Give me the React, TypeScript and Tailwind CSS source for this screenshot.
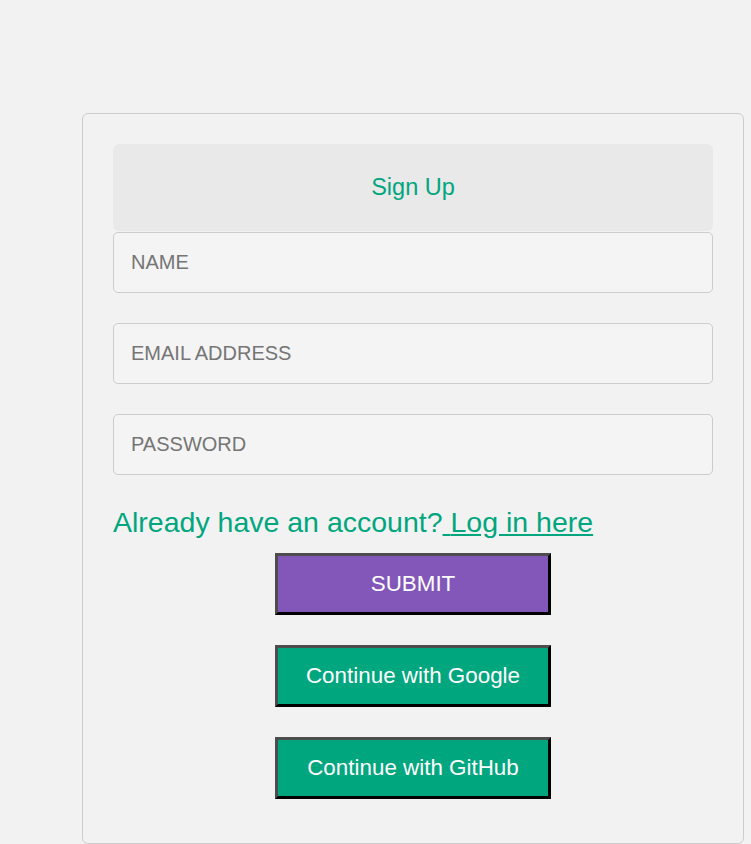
import React from "react";

const fields = ["NAME", "EMAIL ADDRESS", "PASSWORD"];

const btn =
  "block mx-auto w-[276px] h-[62px] border-[3px] border-t-[#4d4d4d] border-l-[#4d4d4d] border-r-black border-b-black text-white text-[22.4px]";

export default function App() {
  return (
    <div className="min-h-[844px] bg-[#f2f2f2] pt-[113px] font-['Liberation_Sans',Arial,sans-serif]">
      <div className="ml-[82px] w-[662px] border border-[#cccccc] rounded-[6px] bg-[#f2f2f2] px-[30px] pt-[30px] pb-[44px]">
        {/* Header */}
        <div className="h-[87px] bg-[#e9e9e9] rounded-[6px] flex items-center justify-center">
          <h1 className="text-[23.5px] text-[#00a67e]">Sign Up</h1>
        </div>

        <form className="mt-px" onSubmit={(e) => e.preventDefault()}>
          {fields.map((f, i) => (
            <input
              key={f}
              placeholder={f}
              type={f === "PASSWORD" ? "password" : "text"}
              className={`block w-full h-[61px] px-[17px] bg-[#f4f4f4] border border-[#cccccc] rounded-[5px] text-[20px] text-[#555] placeholder:text-[#757575] outline-none ${i > 0 ? "mt-[30px]" : ""}`}
            />
          ))}

          <p className="mt-[31px] text-[28.5px] leading-[32px] text-[#00a67e]">
            Already have an account?
            <a href="#" className="underline">
              {" "}Log in here
            </a>
          </p>

          <button type="submit" className={`${btn} mt-[15px] bg-[#8257b9]`}>
            SUBMIT
          </button>
          <button type="button" className={`${btn} mt-[30px] bg-[#00a67e]`}>
            Continue with Google
          </button>
          <button type="button" className={`${btn} mt-[30px] bg-[#00a67e]`}>
            Continue with GitHub
          </button>
        </form>
      </div>
    </div>
  );
}
